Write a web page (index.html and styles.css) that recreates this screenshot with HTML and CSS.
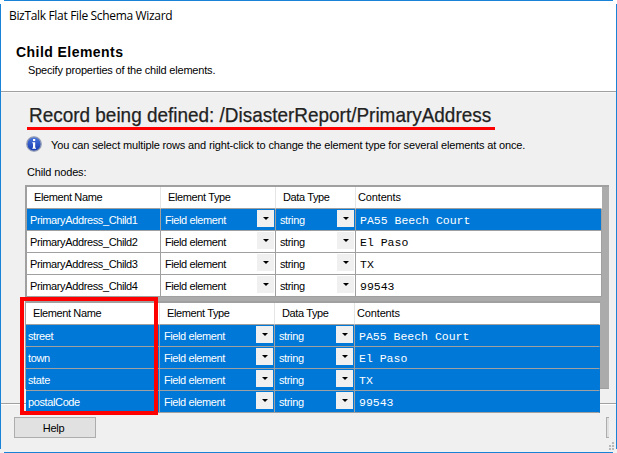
FILE: index.html
```html
<!DOCTYPE html>
<html lang="en">
<head>
<meta charset="utf-8">
<title>BizTalk Flat File Schema Wizard</title>
<link rel="stylesheet" href="styles.css">
</head>
<body>
<main class="window">
  <header class="banner">
    <div class="caption">BizTalk Flat File Schema Wizard</div>
    <h1>Child Elements</h1>
    <p class="subtitle">Specify properties of the child elements.</p>
  </header>
  <section class="content">
    <h2><span>Record being defined: /DisasterReport/PrimaryAddress</span></h2>
    <div class="hint">
      <svg width="16" height="16" viewBox="0 0 16 16"><defs><linearGradient id="ball" x1="0" y1="0" x2="0" y2="1"><stop offset="0" stop-color="#4d78dc"/><stop offset="1" stop-color="#1438b0"/></linearGradient></defs><circle cx="8" cy="8" r="7.2" fill="url(#ball)" stroke="#929bb2" stroke-width="1.3"/><path d="M7 3h2.2v2H7zM6.3 6.2h2.9v5.6h.8v1H6.3v-1H7V7.2h-.7z" fill="#fff"/></svg>
      <span>You can select multiple rows and right-click to change the element type for several elements at once.</span>
    </div>
    <div class="label">Child nodes:</div>
    <div class="panel">
      <div class="grid first">
        <div class="row head"><span>Element Name</span><span>Element Type</span><span>Data Type</span><span>Contents</span></div>
        <div class="row selected"><span>PrimaryAddress_Child1</span><span class="kind">Field element<i></i></span><span>string<i></i></span><span class="mono">PA55 Beech Court</span></div>
        <div class="row"><span>PrimaryAddress_Child2</span><span class="kind">Field element<i></i></span><span>string<i></i></span><span class="mono">El Paso</span></div>
        <div class="row"><span>PrimaryAddress_Child3</span><span class="kind">Field element<i></i></span><span>string<i></i></span><span class="mono">TX</span></div>
        <div class="row"><span>PrimaryAddress_Child4</span><span class="kind">Field element<i></i></span><span>string<i></i></span><span class="mono">99543</span></div>
      </div>
      <div class="grid second">
        <div class="row head"><span>Element Name</span><span>Element Type</span><span>Data Type</span><span>Contents</span></div>
        <div class="row selected"><span>street</span><span class="kind">Field element<i></i></span><span>string<i></i></span><span class="mono">PA55 Beech Court</span></div>
        <div class="row selected"><span>town</span><span class="kind">Field element<i></i></span><span>string<i></i></span><span class="mono">El Paso</span></div>
        <div class="row selected"><span>state</span><span class="kind">Field element<i></i></span><span>string<i></i></span><span class="mono">TX</span></div>
        <div class="row selected"><span>postalCode</span><span class="kind">Field element<i></i></span><span>string<i></i></span><span class="mono">99543</span></div>
        <div class="marker"></div>
      </div>
    </div>
  </section>
  <footer class="footer">
    <button>Help</button>
    <div class="edge"></div>
    <svg class="grip" width="5" height="8" viewBox="0 0 5 8" fill="#b8b8b8"><path d="M3 0h2v2H3zM0 3h2v2H0zM3 3h2v2H3zM0 6h2v2H0zM3 6h2v2H3z"/></svg>
  </footer>
  <div class="frame top"></div><div class="frame right"></div><div class="frame bottom"></div><div class="frame left"></div>
</main>
</body>
</html>
```
FILE: styles.css
```css
* { box-sizing: border-box; }
body { margin: 0; font: 11px/14px "Liberation Sans", Arial, sans-serif; color: #000; }
h1, h2, p { margin: 0; }
.window { position: relative; display: flex; flex-direction: column; width: 617px; height: 453px; overflow: hidden; background: #f0f0f0; }
.banner { height: 92px; padding: 7px 0 0 9px; background: #fff; border-bottom: 1px solid #a0a0a0; }
.caption { height: 18px; font: 12px/18px "Open Sans", sans-serif; letter-spacing: -0.33px; white-space: nowrap; }
h1 { margin: 19px 0 0 7px; font-size: 14px; line-height: 16px; letter-spacing: 0.45px; }
.subtitle { margin: 3px 0 0 19px; letter-spacing: -0.19px; }
.content { position: relative; z-index: 1; height: 311px; padding: 10px 8px 0 25px; border-top: 1px solid #f8f8f8; }
h2 { width: 468px; height: 27px; margin-left: 2px; border-bottom: 3px solid #f00; font-size: 21px; font-weight: 400; line-height: 24px; color: #222; white-space: nowrap; }
h2 span { display: inline-block; margin-left: 2px; transform: scaleX(.902); transform-origin: 0 50%; -webkit-text-stroke: 0.25px #222; }
.hint { display: flex; gap: 9px; height: 20px; margin-top: 6px; padding-left: 1px; white-space: nowrap; letter-spacing: -0.15px; }
.hint span { padding-top: 2px; }
.label { margin: 9px 0 6px 2px; letter-spacing: -0.15px; }
.panel { width: 584px; height: 204px; background: #ababab; border: solid #a0a0a0; border-width: 2px 0 1px 2px; }
.grid { width: 575px; letter-spacing: -0.38px; }
.row { display: grid; grid-template-columns: 134px 115px 80px 246px; height: 22px; background: #fff; }
.row span { position: relative; padding: 4px 0 0 3px; border: solid #a0a0a0; border-width: 0 1px 1px 0; white-space: nowrap; }
.row span + span { padding-left: 4px; }
.row .kind { letter-spacing: -0.4px; }
.row.head span { padding: 3px 0 0 7px; border-right-color: #e5e5e5; }
.row.head span:last-child { border-right-color: #fff; padding-left: 2px; letter-spacing: -0.15px; }
.row.selected { background: #0078d7; color: #fff; }
.row .mono { padding-top: 5px; font: 11.5px/13px "Liberation Mono", monospace; letter-spacing: 0; }
.row i { position: absolute; right: 1px; top: 1px; width: 17px; height: 17px; background: #f0f0f0; }
.row i::after { content: ""; position: absolute; left: 6px; top: 7px; border: 3px solid transparent; border-top-color: #000; border-bottom: 0; }
.second { position: relative; width: 574px; margin: 4px 0 0 -1px; border-top: 2px solid #a0a0a0; }
.second .row { grid-template-columns: 134px 115px 80px 245px; }
.second .row.selected span:first-child { padding-left: 2px; }
.second .row.selected span:last-child { border-right-color: #0078d7; }
.marker { position: absolute; left: -6px; top: -6px; width: 138px; height: 118px; border: 4px solid #f00; }
.footer { position: relative; display: flex; justify-content: space-between; height: 50px; padding: 13px 8px 0 14px; border-top: 1px solid #a0a0a0; box-shadow: inset 0 1px #fff; }
button { width: 82px; height: 21px; padding: 0 3px 0 0; border: 1px solid #adadad; background: #e1e1e1; font: inherit; letter-spacing: -0.3px; color: #000; }
.edge { width: 3px; height: 21px; border: 1px solid #adadad; border-right: 0; background: #e1e1e1; }
.grip { position: absolute; left: 609px; top: 38px; }
.frame { position: absolute; z-index: 2; background: #1883d7; }
.top, .bottom { left: 4px; right: 4px; height: 1px; }
.top { top: 0; }
.bottom { bottom: 0; }
.left, .right { top: 4px; bottom: 4px; width: 1px; }
.left { left: 0; }
.right { right: 0; }
```
